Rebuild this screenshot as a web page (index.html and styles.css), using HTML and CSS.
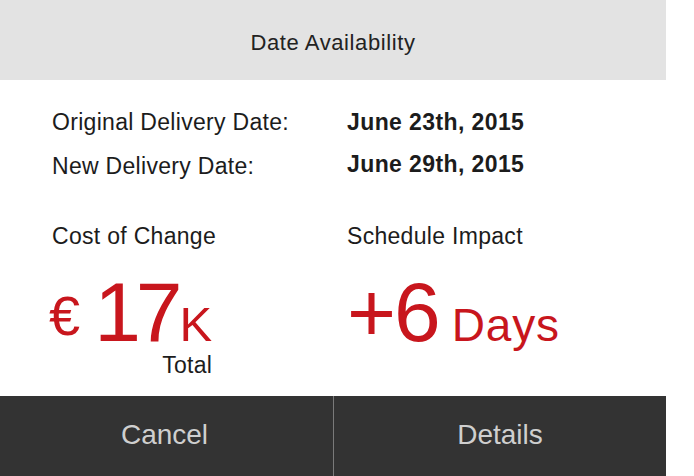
FILE: index.html
```html
<!DOCTYPE html>
<html lang="en">
<head>
<meta charset="utf-8">
<title>Date Availability</title>
<link rel="stylesheet" href="styles.css">
</head>
<body>
<div class="panel">
  <header class="panel-header">Date Availability</header>
  <main class="panel-body">
    <div class="grid">
      <div class="label">Original Delivery Date:</div>
      <div class="value">June 23th, 2015</div>
      <div class="label row2 low">New Delivery Date:</div>
      <div class="value row2">June 29th, 2015</div>
      <div class="label section">Cost of Change</div>
      <div class="label section">Schedule Impact</div>
      <div class="cost">
        <div class="big">
          <span class="euro">€</span><span class="num seventeen">17</span><span class="unit-k">K</span>
        </div>
        <div class="total">Total</div>
      </div>
      <div class="impact">
        <div class="big">
          <span class="num plus">+6</span><span class="unit-days">Days</span>
        </div>
      </div>
    </div>
  </main>
  <footer class="panel-footer">
    <button class="btn">Cancel</button>
    <button class="btn">Details</button>
  </footer>
</div>
</body>
</html>
```

FILE: styles.css
```css
* { box-sizing: border-box; }
html, body {
  margin: 0;
  padding: 0;
  background: #ffffff;
}
body {
  width: 694px;
  height: 476px;
  overflow: hidden;
  font-family: "Liberation Sans", Arial, Helvetica, sans-serif;
  color: #1c1c1c;
}
.panel {
  width: 666px;
  height: 476px;
  display: flex;
  flex-direction: column;
  background: #ffffff;
}
.panel-header {
  height: 80px;
  flex: 0 0 80px;
  background: #e3e3e3;
  color: #222222;
  font-size: 22px;
  letter-spacing: 0.6px;
  display: flex;
  align-items: center;
  justify-content: center;
  padding-top: 6px;
}
.panel-body {
  flex: 1;
  padding: 22px 0 0 52px;
}
.grid {
  display: grid;
  grid-template-columns: 295px auto;
}
.label, .value {
  font-size: 23px;
  line-height: 40px;
  white-space: nowrap;
  letter-spacing: 0.3px;
}
.value {
  font-weight: bold;
  letter-spacing: 0.4px;
}
.row2 {
  margin-top: 2px;
}
.low {
  padding-top: 2px;
}
.section {
  margin-top: 30px;
}
.big {
  line-height: 1;
  white-space: nowrap;
  color: #c8161d;
  margin-top: 21px;
  display: flex;
  align-items: baseline;
}
.cost {
  display: inline-flex;
  flex-direction: column;
  align-items: flex-end;
  justify-self: start;
  margin-left: -3px;
}
.euro {
  font-size: 56px;
  position: relative;
  top: -6px;
}
.num {
  font-size: 84px;
  line-height: 0.85;
}
.seventeen {
  margin-left: 14px;
  letter-spacing: -5px;
}
.plus {
  letter-spacing: -2px;
}
.unit-k {
  font-size: 49px;
  line-height: 0.85;
  margin-left: 2px;
}
.unit-days {
  font-size: 46px;
  line-height: 0.85;
  letter-spacing: 0.8px;
  margin-left: 13px;
}
.total {
  font-size: 23px;
  line-height: 26px;
  margin-top: 2px;
  letter-spacing: 0.3px;
  color: #1c1c1c;
}
.panel-footer {
  height: 80px;
  flex: 0 0 80px;
  background: #333333;
  display: grid;
  grid-template-columns: 333px 333px;
}
.btn {
  border: 0;
  background: transparent;
  color: #cfcfcf;
  font-family: "Liberation Sans", Arial, Helvetica, sans-serif;
  font-size: 28px;
  padding: 0 0 2px 0;
  margin: 0;
}
.btn:first-child {
  padding-right: 4px;
}
.btn + .btn {
  border-left: 1px solid #7a7a7a;
}
```
